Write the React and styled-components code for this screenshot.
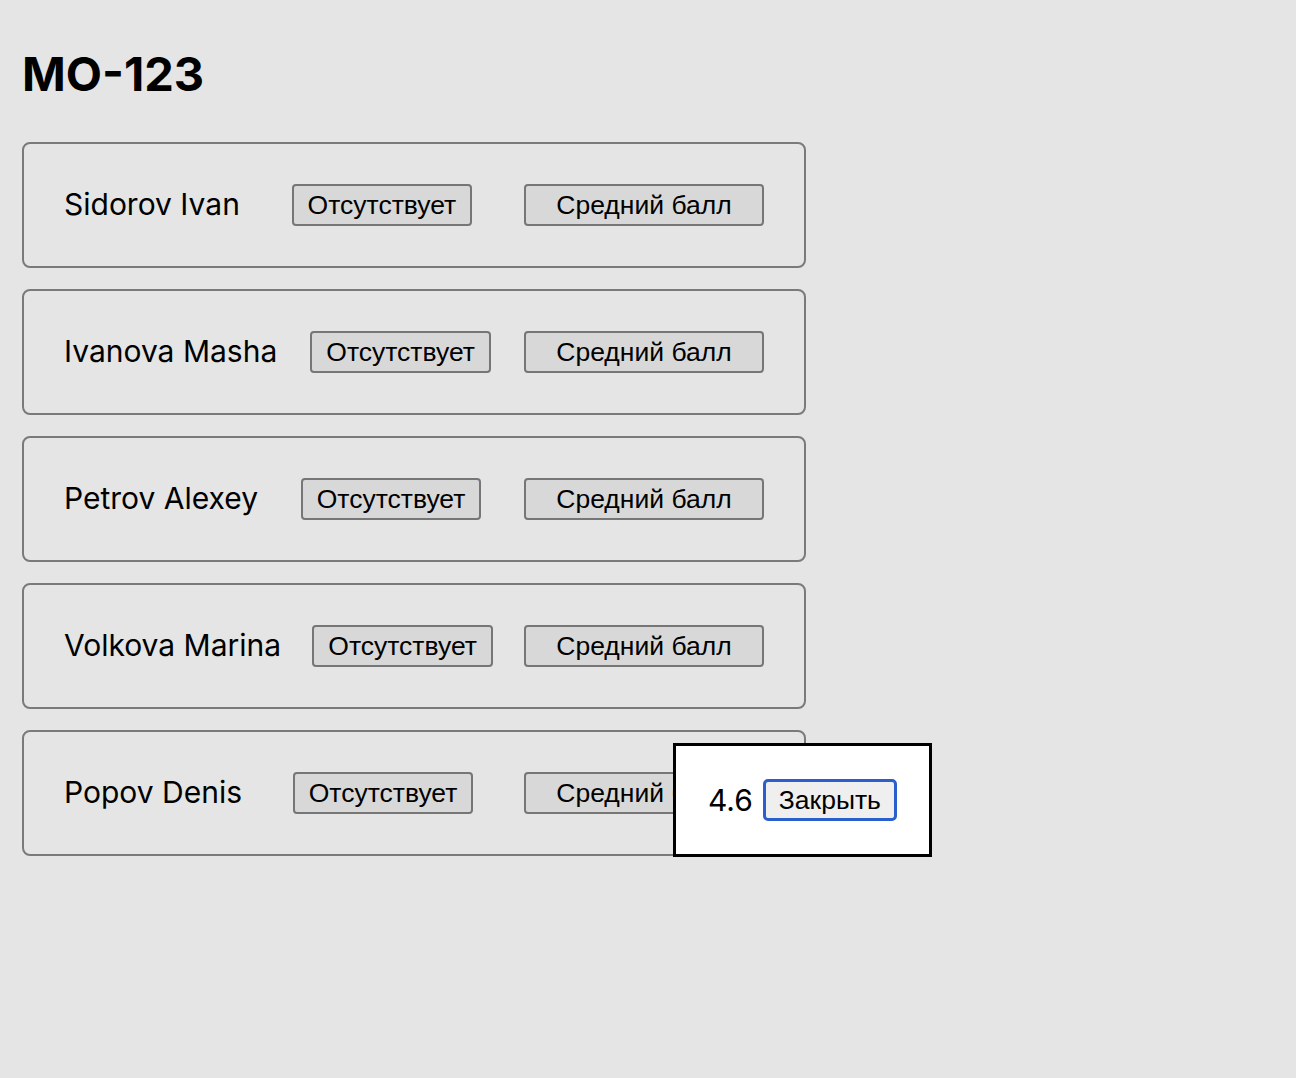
import styled, { createGlobalStyle } from "styled-components";

const Global = createGlobalStyle`
  html, body {
    margin: 0;
    background: #e5e5e5;
  }
  body {
    font-family: Inter, "Noto Sans", sans-serif;
    color: #000;
  }
`

const Page = styled.div`
  padding: 44px 22px 40px 22px;
  min-height: 1078px;
  box-sizing: border-box;
`

const Title = styled.h1`
  margin: 0 0 38px 0;
  font-size: 47px;
  line-height: 60px;
  font-weight: 700;
`

const List = styled.div`
  display: flex;
  flex-direction: column;
  gap: 21px;
  width: 784px;
`

const Card = styled.div`
  position: relative;
  display: flex;
  align-items: center;
  justify-content: space-between;
  padding: 40px;
  border: 2px solid #7a7a7a;
  border-radius: 8px;
  box-sizing: border-box;
  height: 126px;
`

const Name = styled.span`
  font-size: 30px;
  font-weight: 400;
  line-height: 36px;
  margin-top: -2px;
`

const Button = styled.button`
  font-family: "Liberation Sans", Arial, sans-serif;
  font-size: 26.5px;
  line-height: 28px;
  color: #000;
  background: #d8d8d8;
  border: 2px solid #767676;
  border-radius: 4px;
  padding: 5px 14px;
  height: 42px;
  width: ${p => (p.$wide ? "240px" : "auto")};
  cursor: pointer;
`

const Popup = styled.div`
  position: absolute;
  left: 649px;
  top: 11px;
  display: flex;
  align-items: center;
  gap: 10px;
  background: #fff;
  border: 3px solid #000;
  width: 259px;
  height: 114px;
  box-sizing: border-box;
  padding: 0 32px;
`

const Score = styled.span`
  font-size: 30px;
`

const CloseButton = styled.button`
  font-family: "Liberation Sans", Arial, sans-serif;
  font-size: 26.5px;
  line-height: 28px;
  color: #000;
  background: #efefef;
  border: 3px solid #2b5fcc;
  border-radius: 5px;
  padding: 4px 13px;
  height: 42px;
`

const students = [
  { id: 1, name: "Sidorov Ivan" },
  { id: 2, name: "Ivanova Masha" },
  { id: 3, name: "Petrov Alexey" },
  { id: 4, name: "Volkova Marina" },
  { id: 5, name: "Popov Denis", avg: 4.6 },
]

const App = () => {
  return (
    <Page>
      <Global />
      <Title>MO-123</Title>
      <List>
        {students.map(s => (
          <Card key={s.id}>
            <Name>{s.name}</Name>
            <Button>Отсутствует</Button>
            <Button $wide>Средний балл</Button>
            {s.avg && (
              <Popup>
                <Score>{s.avg}</Score>
                <CloseButton>Закрыть</CloseButton>
              </Popup>
            )}
          </Card>
        ))}
      </List>
    </Page>
  )
}

export default App
